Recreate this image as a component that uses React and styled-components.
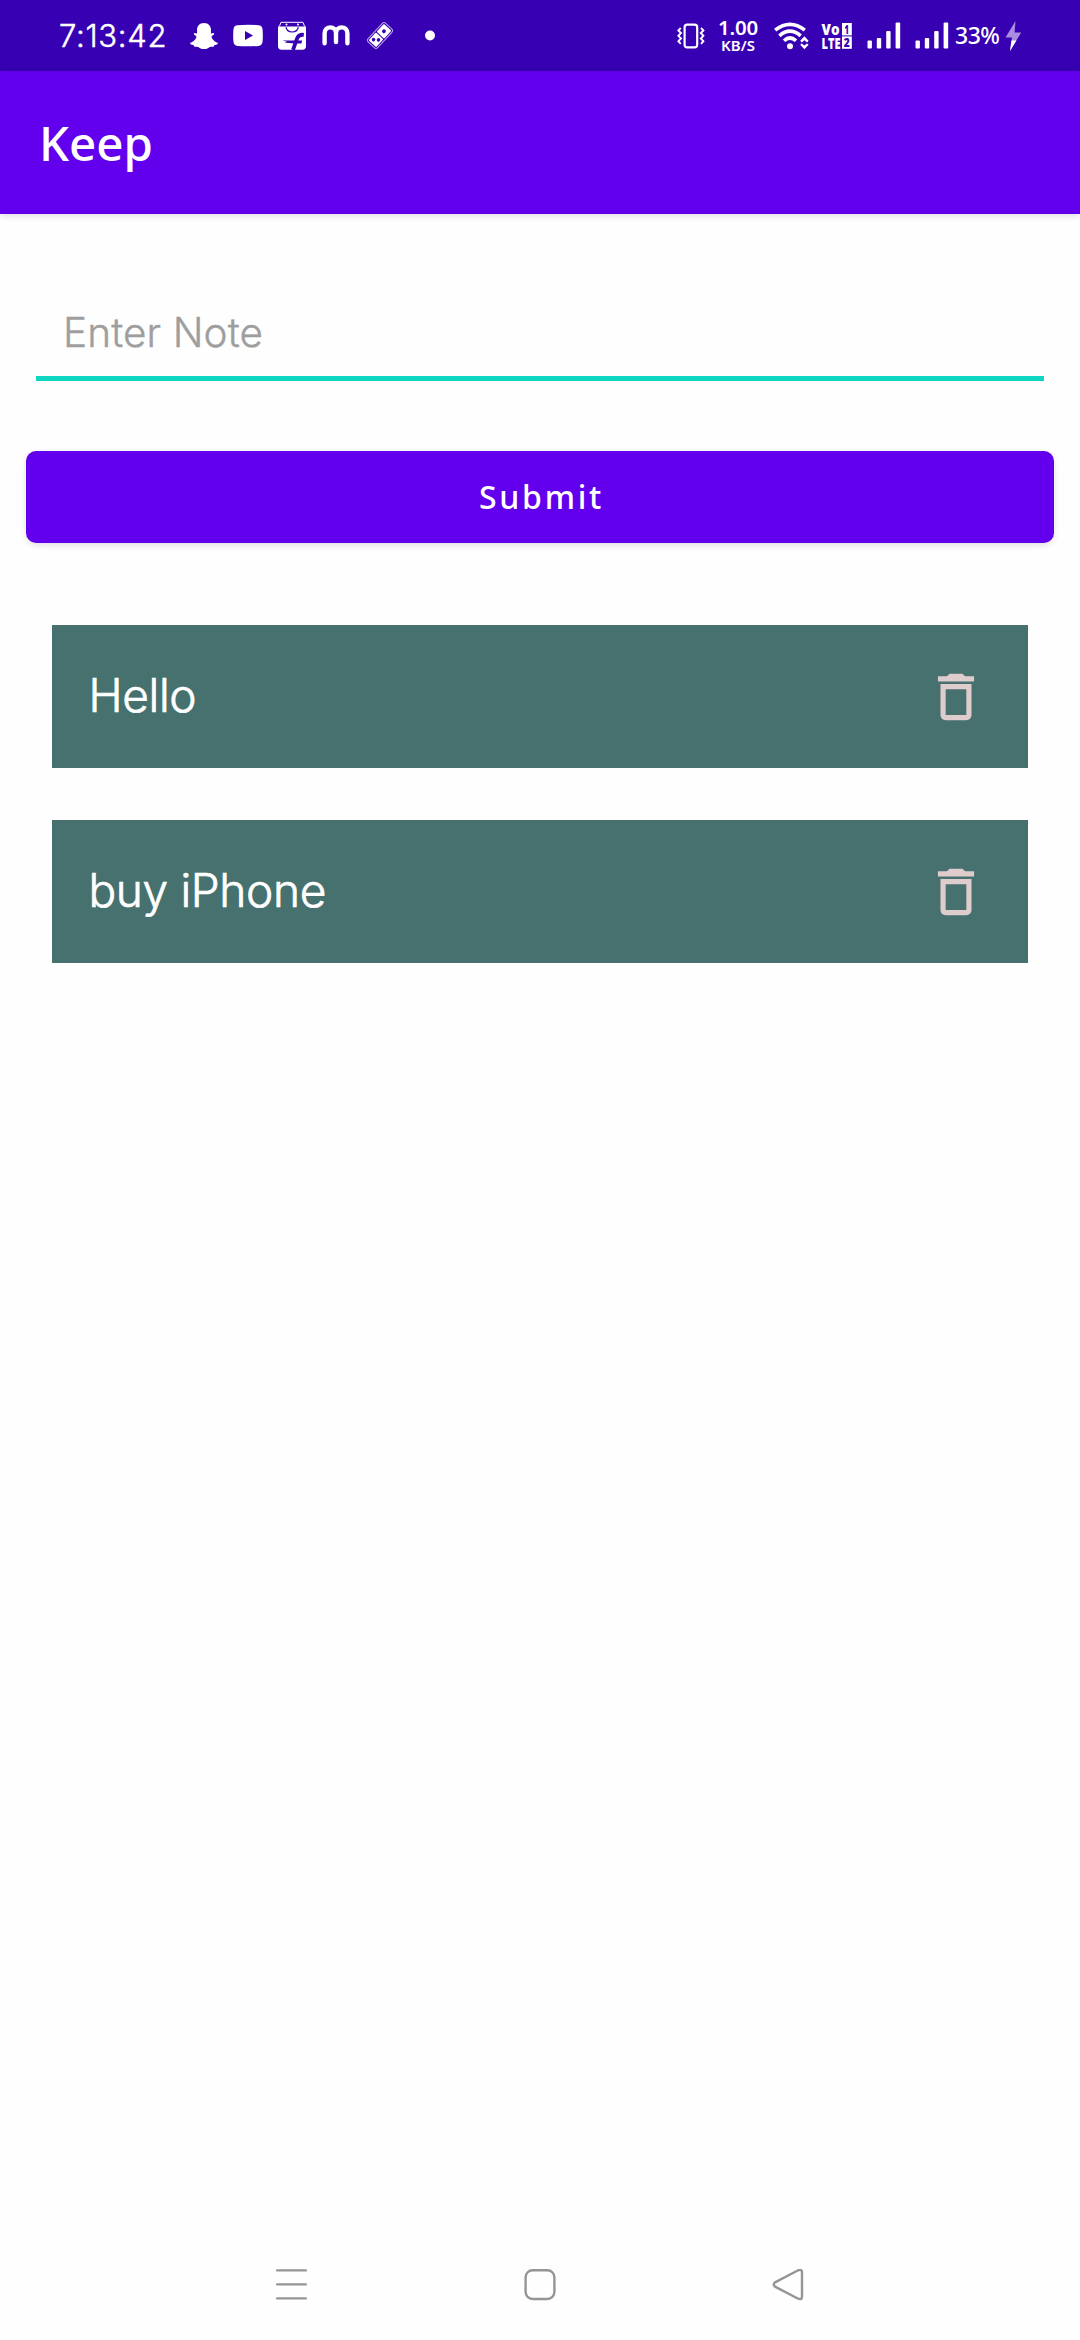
import React, { useState } from 'react';
import styled, { createGlobalStyle } from 'styled-components';

const GlobalStyle = createGlobalStyle`
  * { box-sizing: border-box; }
  body {
    margin: 0;
    background: #fefefe;
    font-family: "Noto Sans", "Open Sans", Roboto, sans-serif;
  }
`;

const lightFont = 'Inter, "Noto Sans", sans-serif';

const Screen = styled.div`
  width: 1080px;
  height: 2340px;
  display: flex;
  flex-direction: column;
  background: #fefefe;
  overflow: hidden;
`;

const StatusBar = styled.header`
  height: 71px;
  flex: none;
  display: flex;
  align-items: flex-start;
  justify-content: space-between;
  padding: 0 58px 0 59px;
  background: #3700b3;
  color: #fff;
`;

const StatusGroup = styled.div`
  height: 71px;
  display: flex;
  align-items: center;
`;

const Clock = styled.span`
  width: 108px;
  margin-right: 22px;
  font-family: ${lightFont};
  font-size: 31px;
  font-weight: 300;
  -webkit-text-stroke: 0.5px currentColor;
  line-height: 71px;
  letter-spacing: 0.7px;
  white-space: nowrap;
`;

const StatusIcon = styled.svg`
  display: block;
  flex: none;
  width: ${(p) => p.$w}px;
  height: ${(p) => p.$h || 32}px;
  margin-left: ${(p) => p.$gap || 0}px;
  overflow: visible;
`;

const Speed = styled.div`
  width: 42px;
  margin-left: 12px;
  display: flex;
  flex-direction: column;
  align-items: center;
`;

const SpeedValue = styled.span`
  font-size: 20.5px;
  font-weight: 600;
  line-height: 19px;
  letter-spacing: -0.2px;
`;

const SpeedUnit = styled.span`
  font-size: 15px;
  font-weight: 600;
  line-height: 16px;
`;

const Percent = styled.span`
  width: 46px;
  margin-left: 6px;
  padding-bottom: 1px;
  font-size: 23px;
  font-weight: 500;
  letter-spacing: -0.5px;
  line-height: 69px;
  white-space: nowrap;
`;

const AppBar = styled.div`
  height: 143px;
  flex: none;
  padding: 0 39px;
  background: #6200ee;
  box-shadow: 0 1px 7px rgba(0, 0, 0, 0.15);
`;

const Title = styled.h1`
  margin: 0;
  color: #fff;
  font-size: 47.5px;
  font-weight: 500;
  line-height: 143px;
`;

const Content = styled.main`
  flex: 1;
  display: flex;
  flex-direction: column;
`;

const NoteInput = styled.input`
  height: 108px;
  margin: 59px 36px 0;
  padding: 16px 27px 0;
  border: 0;
  border-bottom: 5px solid #0fd6c2;
  border-radius: 0;
  outline: 0;
  background: transparent;
  color: #222;
  font-family: ${lightFont};
  font-size: 40.5px;
  font-weight: 300;
  letter-spacing: 0.1px;
  &::placeholder {
    color: #9e9e9e;
    opacity: 1;
    -webkit-text-stroke: 0.4px #9e9e9e;
  }
`;

const SubmitButton = styled.button`
  height: 92px;
  margin: 70px 26px 0;
  padding: 0 0 1px 3px;
  border: 0;
  border-radius: 10px;
  background: #6200ee;
  box-shadow: 0 2px 6px rgba(0, 0, 0, 0.12);
  color: #fff;
  font-family: inherit;
  font-size: 32px;
  font-weight: 500;
  letter-spacing: 2.7px;
`;

const NoteList = styled.ul`
  list-style: none;
  margin: 82px 52px 0;
  padding: 0;
  display: flex;
  flex-direction: column;
  gap: 52px;
`;

const NoteCard = styled.li`
  height: 143px;
  display: flex;
  align-items: center;
  justify-content: space-between;
  padding: 0 41px 0 36.5px;
  background: #46716f;
`;

const NoteText = styled.span`
  padding-bottom: 2px;
  color: #fff;
  font-family: ${lightFont};
  font-size: 46px;
  font-weight: 300;
  -webkit-text-stroke: 0.7px currentColor;
  letter-spacing: -0.35px;
  line-height: 141px;
`;

const DeleteButton = styled.button`
  width: 62px;
  height: 62px;
  padding: 0;
  border: 0;
  background: none;
  color: #dfcccc;
`;

const DeleteIcon = styled.svg`
  display: block;
  width: 62px;
  height: 62px;
`;

const NavBar = styled.nav`
  height: 111px;
  flex: none;
  display: flex;
  justify-content: space-between;
  align-items: center;
  padding: 0 276px;
`;

const NavIcon = styled.svg`
  display: block;
  width: 32px;
  height: 32px;
  fill: none;
  stroke: #959595;
  stroke-width: 2.4;
  stroke-linecap: round;
  stroke-linejoin: round;
`;

const Signal = ({ gap }) => (
  <StatusIcon $w={34} $gap={gap} viewBox="0 0 34 32" fill="#fff">
    <rect x="0.5" y="20.5" width="4.4" height="8" rx="1" />
    <rect x="9.8" y="18" width="4.4" height="10.5" rx="1" />
    <rect x="19.2" y="11" width="4.4" height="17.5" rx="1" />
    <rect x="28.6" y="2.5" width="4.6" height="26" rx="1" />
  </StatusIcon>
);

export default function App() {
  const [notes, setNotes] = useState(['Hello', 'buy iPhone']);
  const [draft, setDraft] = useState('');

  const submit = () => {
    if (!draft.trim()) return;
    setNotes([...notes, draft.trim()]);
    setDraft('');
  };

  return (
    <>
      <GlobalStyle />
      <Screen>
        <StatusBar>
          <StatusGroup>
            <Clock>7:13:42</Clock>
            {/* Snapchat */}
            <StatusIcon $w={30} viewBox="0 0 30 32" fill="#fff">
              <path d="M15 3C19.8 3 22 6.5 22 10.2L21.9 13.4C23 13.7 24.4 12.4 25 13.4C25.5 14.7 22.8 15.4 22.6 16.5C22.4 18.5 25.5 22 28.8 22.8C29.2 24.8 25.8 25 25 25.5L24.4 27.1C22 26.5 20.8 26.8 19.3 27.9C16.8 29.5 13.2 29.5 10.7 27.9C9.2 26.8 8 26.5 5.6 27.1L5 25.5C4.2 25 .8 24.8 1.2 22.8C4.5 22 7.6 18.5 7.4 16.5C7.2 15.4 4.5 14.7 5 13.4C5.6 12.4 7 13.7 8.1 13.4L8 10.2C8 6.5 10.2 3 15 3Z" />
            </StatusIcon>
            {/* YouTube */}
            <StatusIcon $w={30} $gap={14} viewBox="0 0 30 32" fill="#fff">
              <path fillRule="evenodd" d="M4.5 5.2Q15 4.2 25.5 5.2Q29 5.5 29.5 9Q30.2 15.5 29.5 22Q29 25.6 25.5 25.9Q15 26.8 4.5 25.9Q1 25.6.5 22Q-.2 15.5.5 9Q1 5.5 4.5 5.2ZM12 11V20L20 15.5Z" />
            </StatusIcon>
            {/* Flipkart */}
            <StatusIcon $w={28} $gap={15} viewBox="0 0 28 32">
              <path fill="#fff" d="M0 6.4H28V26Q28 29.8 24.4 29.8H3.6Q0 29.8 0 26Z" />
              <path fill="none" stroke="#fff" strokeWidth="1" d="M1.4 6.4L3 2.3H25L26.6 6.4" />
              <circle cx="8.5" cy="4.6" r="1" fill="#fff" />
              <circle cx="20" cy="4.6" r="1" fill="#fff" />
              <path fill="none" stroke="#3700b3" strokeWidth="1.2" d="M8 7.2Q8.6 11.8 14.2 12Q19.7 11.8 20.3 7.2" />
              <path fill="none" stroke="#3700b3" strokeWidth="3.8" d="M15 29.8L19.2 18.2Q20.6 14.4 25.8 14.8" />
              <path fill="#3700b3" d="M4.4 20.4H24.2L23.4 23.4H16L6.4 22.6L9 21.8Z" />
            </StatusIcon>
            {/* Meesho */}
            <StatusIcon $w={28} $gap={15.5} viewBox="0 0 28 32" fill="none" stroke="#fff" strokeWidth="4.4" strokeLinecap="round">
              <path d="M2.6 23.2V13.5C2.6 5.3 14 5.3 14 13.5V22M14 13.5C14 5.3 25.4 5.3 25.4 13.5V23.2" />
            </StatusIcon>
            {/* Domino's */}
            <StatusIcon $w={28} $gap={16.5} viewBox="0 0 28 32">
              <g transform="rotate(-47 14 15.5)">
                <rect x="1.2" y="9" width="25.6" height="13" rx="2.4" fill="none" stroke="#b9a6e6" strokeWidth="1" />
                <rect x="2.8" y="10.4" width="10.7" height="10.2" rx="1" fill="#fff" />
                <rect x="14.5" y="10.4" width="10.7" height="10.2" rx="1" fill="#fff" />
                <circle cx="19.8" cy="15.5" r="1.9" fill="#3700b3" />
                <circle cx="6.6" cy="13.6" r="1.8" fill="#3700b3" />
                <circle cx="9.8" cy="17.4" r="1.8" fill="#3700b3" />
              </g>
            </StatusIcon>
            <StatusIcon $w={10} $gap={31} viewBox="0 0 10 32" fill="#fff">
              <circle cx="5" cy="15.5" r="5" />
            </StatusIcon>
          </StatusGroup>

          <StatusGroup>
            {/* Vibrate */}
            <StatusIcon $w={28} viewBox="0 0 28 32" fill="none" stroke="#fff" strokeWidth="1.9">
              <rect x="7.6" y="4.6" width="12.6" height="22.8" rx="2.6" strokeWidth="2.2" />
              <path d="M3.8 8L1.4 10.4L4 13L1.4 15.8L4 18.5L1.4 21.2L3.8 23.8M24 8L26.4 10.4L23.8 13L26.4 15.8L23.8 18.5L26.4 21.2L24 23.8" />
            </StatusIcon>
            <Speed>
              <SpeedValue>1.00</SpeedValue>
              <SpeedUnit>KB/S</SpeedUnit>
            </Speed>
            {/* Wi-Fi */}
            <StatusIcon $w={36} $gap={15} viewBox="0 0 36 32" fill="none" stroke="#fff" strokeWidth="3.6">
              <path d="M1.2 10.2Q16 -1.6 30.8 10.2M5.4 15.8Q16 6.6 26.6 15.8M10 20.8Q16 15.2 22 20.8" />
              <circle cx="16" cy="26.2" r="3" fill="#fff" stroke="none" />
              <path fill="#fff" stroke="none" d="M26.2 20.8L30.4 16.2L34.6 20.8L33 22.4L30.4 20.2L27.8 22.4ZM26.2 24.8L30.4 29.2L34.6 24.8L33 23.4L30.4 25.4L27.8 23.4Z" />
            </StatusIcon>
            {/* VoLTE */}
            <StatusIcon $w={32} $gap={11} viewBox="0 0 32 32" fill="#fff" fontFamily="Open Sans, Noto Sans, sans-serif" fontWeight="800">
              <text x="0.5" y="15.2" fontSize="16" textLength="18" lengthAdjust="spacingAndGlyphs">Vo</text>
              <text x="0.5" y="28.6" fontSize="16" textLength="19" lengthAdjust="spacingAndGlyphs">LTE</text>
              <rect x="21" y="3" width="9.8" height="12.4" />
              <rect x="21" y="16.4" width="9.8" height="12.4" />
              <g fill="#3700b3" fontSize="12">
                <text x="23.6" y="13.6" textLength="4.4" lengthAdjust="spacingAndGlyphs">1</text>
                <text x="22.8" y="27" textLength="6" lengthAdjust="spacingAndGlyphs">2</text>
              </g>
            </StatusIcon>
            <Signal gap={14} />
            <Signal gap={14} />
            <Percent>33%</Percent>
            {/* Charging */}
            <StatusIcon $w={17} $gap={4} viewBox="0 0 17 32">
              <path fill="#a98be0" d="M10.5 1L.5 17.5H7L5 31L16.2 12.5H9.6Z" />
              <path fill="#fff" d="M6.5 20.5H11.4L5 31Z" />
            </StatusIcon>
          </StatusGroup>
        </StatusBar>

        <AppBar>
          <Title>Keep</Title>
        </AppBar>

        <Content>
          <NoteInput placeholder="Enter Note" value={draft} onChange={(e) => setDraft(e.target.value)} />
          <SubmitButton onClick={submit}>Submit</SubmitButton>
          <NoteList>
            {notes.map((note, i) => (
              <NoteCard key={i}>
                <NoteText>{note}</NoteText>
                <DeleteButton aria-label="Delete" onClick={() => setNotes(notes.filter((_, n) => n !== i))}>
                  <DeleteIcon viewBox="0 0 24 24" fill="currentColor">
                    <path d="M6 19c0 1.1.9 2 2 2h8c1.1 0 2-.9 2-2V7H6v12zM8 9h8v10H8V9zm7.5-5l-1-1h-5l-1 1H5v2h14V4h-3.5z" />
                  </DeleteIcon>
                </DeleteButton>
              </NoteCard>
            ))}
          </NoteList>
        </Content>

        <NavBar>
          <NavIcon viewBox="0 0 32 32"><path d="M1.2 1.4H29.8M1.2 15.4H29.8M1.2 29.4H29.8" /></NavIcon>
          <NavIcon viewBox="0 0 32 32"><rect x="1.6" y="1.2" width="28.8" height="28.8" rx="7" /></NavIcon>
          <NavIcon viewBox="0 0 32 32"><path d="M3 13.4L26.2 1.3Q30 -.1 30 3.5V27.5Q30 31.1 26.2 29.7L3 17.6Q.4 15.5 3 13.4Z" /></NavIcon>
        </NavBar>
      </Screen>
    </>
  );
}
